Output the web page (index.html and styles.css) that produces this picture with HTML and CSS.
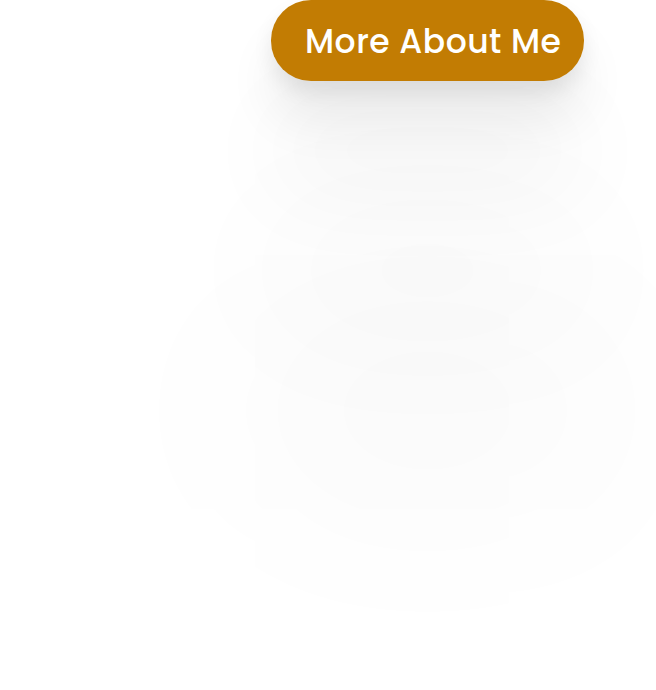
FILE: index.html
```html
<!DOCTYPE html>
<html lang="en">
<head>
<meta charset="utf-8">
<title>More About Me</title>
<link rel="stylesheet" href="styles.css">
</head>
<body>
<main class="page">
  <a class="btn" href="#">More About Me</a>
</main>
</body>
</html>
```

FILE: styles.css
```css
html, body {
  margin: 0;
  padding: 0;
  background: #ffffff;
}
.page {
  display: flex;
  padding-left: 271px;
  height: 690px;
  box-sizing: border-box;
}
.btn {
  display: flex;
  align-items: center;
  height: 81px;
  box-sizing: border-box;
  padding: 3px 23px 0 34px;
  border-radius: 40px;
  background: #c27c03;
  color: #ffffff;
  text-decoration: none;
  font-family: "Poppins", "Lato", "Open Sans", sans-serif;
  font-size: 33px;
  font-weight: 500;
  letter-spacing: 0.5px;
  white-space: nowrap;
  box-shadow:
    0 10px 20px rgba(0,0,0,0.08),
    0 40px 50px rgba(0,0,0,0.07),
    0 110px 100px rgba(0,0,0,0.045),
    0 230px 160px 10px rgba(0,0,0,0.035),
    0 370px 220px 40px rgba(0,0,0,0.035);
}
```
